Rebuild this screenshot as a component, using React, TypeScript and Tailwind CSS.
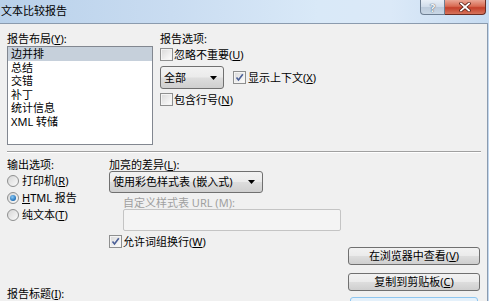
import React from "react"

const btnBg =
  "bg-[linear-gradient(#f2f2f2,#ebebeb_48%,#dddddd_52%,#cfcfcf)]"

function CheckBox({ checked = false }: { checked?: boolean }) {
  return (
    <span className="flex h-[13px] w-[13px] shrink-0 items-center justify-center border border-[#8e8f8f] bg-white">
      <span className="relative flex h-[11px] w-[11px] items-center justify-center border border-[#f4f4f4] bg-linear-to-br from-[#dcdcdc] to-[#fbfbfb]">
        {checked && (
          <svg width="9" height="9" viewBox="0 0 9 9" className="absolute">
            <path d="M1.5 4.5 L3.5 7 L7.8 1.2" fill="none" stroke="#4a5f97" strokeWidth="1.6" />
          </svg>
        )}
      </span>
    </span>
  )
}

function Radio({ checked = false }: { checked?: boolean }) {
  return (
    <span className="flex h-[12px] w-[12px] shrink-0 items-center justify-center rounded-full border border-[#8e8f8f] bg-linear-to-br from-[#d6d6d6] to-[#fbfbfb]">
      {checked && (
        <span className="h-[6px] w-[6px] rounded-full bg-[radial-gradient(circle_at_40%_35%,#8ccaf5,#1f6fb8_70%,#1a4f8a)]" />
      )}
    </span>
  )
}

function Arrow() {
  return (
    <svg width="7" height="4" viewBox="0 0 7 4">
      <path d="M0 0 H7 L3.5 4 Z" fill="#000" />
    </svg>
  )
}

function TitleBar() {
  return (
    <div className="relative flex h-[23px] items-center bg-[linear-gradient(90deg,#b9d1ea_0%,#c9dcf1_35%,#d9e9f8_65%,#dbe9f8_80%,#c6dbf1_100%)] pl-[1px] text-[11px] leading-[14px] text-black">
      <span className="-mt-[2px]">文本比较报告</span>
      <div className="absolute right-[3px] top-0 flex">
        <div className="flex h-[15px] w-[25px] items-center justify-center rounded-bl-[4px] border border-t-0 border-[#6d7e92] bg-[linear-gradient(#e8eff7,#d0dcea_50%,#bccbdc_52%,#c9d7e6)]">
          <span className="text-[11px] font-bold leading-none text-[#f4f7fa] [text-shadow:0_0_1px_#4d5b6b,0_0_1px_#4d5b6b]">?</span>
        </div>
        <div className="flex h-[15px] w-[41px] items-center justify-center rounded-br-[4px] border border-l-0 border-t-0 border-[#6b2c22] bg-[linear-gradient(#eaa796,#d86a52_45%,#c4402a_55%,#d6745c)]">
          <svg width="12" height="10" viewBox="0 0 12 10">
            <path d="M2 1.5 L10 8.5 M10 1.5 L2 8.5" stroke="#5a2218" strokeWidth="3.4" strokeLinecap="square" />
            <path d="M2 1.5 L10 8.5 M10 1.5 L2 8.5" stroke="#ffffff" strokeWidth="1.8" strokeLinecap="square" />
          </svg>
        </div>
      </div>
    </div>
  )
}

const layouts = ["边并排", "总结", "交错", "补丁", "统计信息", "XML 转储"]

export default function App() {
  return (
    <div className="h-[301px] w-[489px] overflow-hidden bg-[#f0f0f0] font-['Noto_Sans','Noto_Sans_CJK_SC',sans-serif] text-[11px] leading-[14px] text-black">
      <TitleBar />
      <div className="flex">
        <div className="h-[278px] w-[488px] border-r border-t border-[#8b9bae] bg-[#f0f0f0]">
          {/* 上半部分 */}
          <div className="flex pl-[7px] pt-[8px]">
            <div className="w-[146px]">
              <div className="h-[14px]">
                报告布局(<span className="underline">Y</span>):
              </div>
              <div className="h-[99px] border border-[#828790] bg-white">
                {layouts.map((l, i) => (
                  <div
                    key={l}
                    className={
                      "h-[13.6px] pl-[3px] leading-[13.6px] " +
                      (i === 0 ? "bg-[#c6d0db]" : "")
                    }
                  >
                    {l}
                  </div>
                ))}
              </div>
            </div>
            <div className="ml-[7px]">
              <div className="h-[14px]">报告选项:</div>
              <div className="mt-[2px] flex h-[13px] items-center gap-[1px]">
                <CheckBox />
                <span>
                  忽略不重要(<span className="underline">U</span>)
                </span>
              </div>
              <div className="mt-[5px] flex h-[23px] items-center">
                <div className={"flex h-[23px] w-[64px] items-center justify-between rounded-[3px] border border-[#707070] pl-[3px] pr-[6px] " + btnBg}>
                  <span>全部</span>
                  <Arrow />
                </div>
                <div className="ml-[9px] flex items-center gap-[2px]">
                  <CheckBox checked />
                  <span>
                    显示上下文(<span className="underline">X</span>)
                  </span>
                </div>
              </div>
              <div className="mt-[4px] flex h-[13px] items-center gap-[1px]">
                <CheckBox />
                <span>
                  包含行号(<span className="underline">N</span>)
                </span>
              </div>
            </div>
          </div>

          {/* 分隔线 */}
          <div className="ml-[7px] mr-[6px] mt-[6px] border-b border-t border-b-white border-t-[#a0a0a0]" />

          {/* 下半部分 */}
          <div className="flex pt-[5px]">
            <div className="w-[109px] pl-[7px]">
              <div className="h-[14px]">输出选项:</div>
              <div className="flex h-[17px] items-center gap-[3px]">
                <Radio />
                <span>
                  打印机(<span className="underline">R</span>)
                </span>
              </div>
              <div className="flex h-[17px] items-center gap-[3px]">
                <Radio checked />
                <span>
                  <span className="underline">H</span>TML 报告
                </span>
              </div>
              <div className="flex h-[17px] items-center gap-[3px]">
                <Radio />
                <span>
                  纯文本(<span className="underline">T</span>)
                </span>
              </div>
              <div className="mt-[64px] h-[14px]">
                报告标题(<span className="underline">I</span>):
              </div>
            </div>

            <div className="w-[239px]">
              <div className="h-[13px]">
                加亮的差异(<span className="underline">L</span>):
              </div>
              <div className={"flex h-[22px] w-[154px] items-center justify-between rounded-[3px] border border-[#707070] pl-[3px] pr-[7px] " + btnBg}>
                <span>使用彩色样式表 (嵌入式)</span>
                <Arrow />
              </div>
              <div className="ml-[14px] mt-[3px] h-[13px] text-[#a0a0a0]">
                自定义样式表 URL (M):
              </div>
              <div className="ml-[14px] h-[22px] w-[218px] rounded-[2px] border border-[#c4c4c4] bg-[#f4f4f4]" />
              <div className="mt-[4px] flex h-[13px] items-center gap-[1px]">
                <CheckBox checked />
                <span>
                  允许词组换行(<span className="underline">W</span>)
                </span>
              </div>
            </div>

            <div className="w-[132px] pt-[89px]">
              <div className={"flex h-[18px] w-[132px] items-center justify-center rounded-[3px] border border-[#707070] " + btnBg}>
                在浏览器中查看(<span className="underline">V</span>)
              </div>
              <div className={"mt-[8px] flex h-[18px] w-[132px] items-center justify-center rounded-[3px] border border-[#707070] " + btnBg}>
                复制到剪贴板(<span className="underline">C</span>)
              </div>
              <div className="ml-[2px] mt-[6px] h-[18px] w-[128px] rounded-[3px] border border-[#8fc6ef] bg-[#e5f1fb]" />
            </div>
          </div>
        </div>
        <div className="h-[278px] w-[1px] bg-[#c3d8ef]" />
      </div>
    </div>
  )
}
